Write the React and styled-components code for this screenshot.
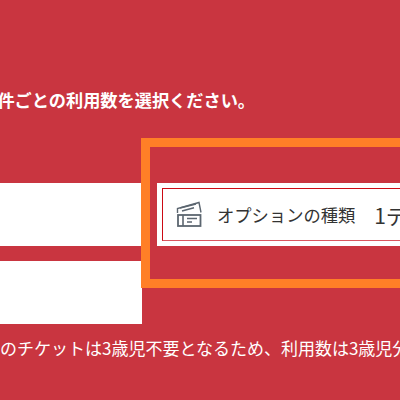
import React from "react";
import styled, { createGlobalStyle } from "styled-components";

const GlobalStyle = createGlobalStyle`
  html, body {
    margin: 0;
    padding: 0;
    background: #c93540;
    overflow: hidden;
  }
`;

const FONT = `"Noto Sans CJK JP", "Noto Sans", sans-serif`;

const Page = styled.div`
  position: relative;
  width: 400px;
  height: 400px;
  overflow: hidden;
  background: #c93540;
  font-family: ${FONT};
`;

const Lead = styled.p`
  margin: 0 0 0 -37px;
  padding-top: 88px;
  height: 183px;
  box-sizing: border-box;
  font-size: 17.2px;
  line-height: 24px;
  font-weight: 700;
  color: #fff;
  white-space: nowrap;
`;

const Columns = styled.div`
  display: flex;
  height: 141px;
`;

const LeftCol = styled.div`
  width: 142px;
  flex: none;
  display: flex;
  flex-direction: column;
  gap: 15px;
`;

const BlankBox = styled.div`
  height: 63px;
  background: #fff;
`;

const RightCol = styled.div`
  flex: none;
  width: 260px;
  padding-left: 15px;
`;

const OptionCard = styled.div`
  height: 63px;
  width: 300px;
  box-sizing: border-box;
  padding: 5px;
  background: #fff;
`;

const OptionInner = styled.div`
  height: 53px;
  box-sizing: border-box;
  display: flex;
  align-items: center;
  padding-left: 13px;
  border: 1px solid #cc0a14;
  border-bottom-color: #d9565f;
  background: #fff;
  color: #333;
  white-space: nowrap;
`;

const TicketIcon = styled.svg`
  width: 28px;
  height: 28px;
  flex: none;
  margin-right: 13px;
  color: #5c6670;
`;

const OptionLabel = styled.span`
  font-size: 17.3px;
  line-height: 24px;
`;

const OptionValue = styled.span`
  margin-left: 19px;
  font-size: 21px;
  line-height: 24px;
`;

const Note = styled.p`
  margin: 0 0 0 -51px;
  padding-top: 12px;
  font-size: 17px;
  line-height: 24px;
  color: #fff;
  white-space: nowrap;
`;

const Highlight = styled.div`
  position: absolute;
  left: 141px;
  top: 138px;
  width: 300px;
  height: 150px;
  box-sizing: border-box;
  border: 9px solid #ff7f27;
  pointer-events: none;
`;

export default function App() {
  return (
    <Page>
      <GlobalStyle />
      <Lead>各条件ごとの利用数を選択ください。</Lead>
      <Columns>
        <LeftCol>
          <BlankBox />
          <BlankBox />
        </LeftCol>
        <RightCol>
          <OptionCard>
            <OptionInner>
              <TicketIcon viewBox="0 0 28 28" fill="none" stroke="currentColor">
                <path d="M1.5 12 V7.5 L23 1.5 L25 11.5" strokeWidth="1.4" />
                <path d="M4 7 L20 3 M6 10 L18 6.8" strokeWidth="1.5" />
                <rect x="2" y="14" width="22.5" height="11" strokeWidth="1.8" />
                <path d="M7 14 V25 M11 17.5 H21 M11 21 H16" strokeWidth="1.6" />
              </TicketIcon>
              <OptionLabel>オプションの種類</OptionLabel>
              <OptionValue>1デイ</OptionValue>
            </OptionInner>
          </OptionCard>
        </RightCol>
      </Columns>
      <Note>こちらのチケットは3歳児不要となるため、利用数は3歳児分を除いてください。</Note>
      <Highlight />
    </Page>
  );
}
